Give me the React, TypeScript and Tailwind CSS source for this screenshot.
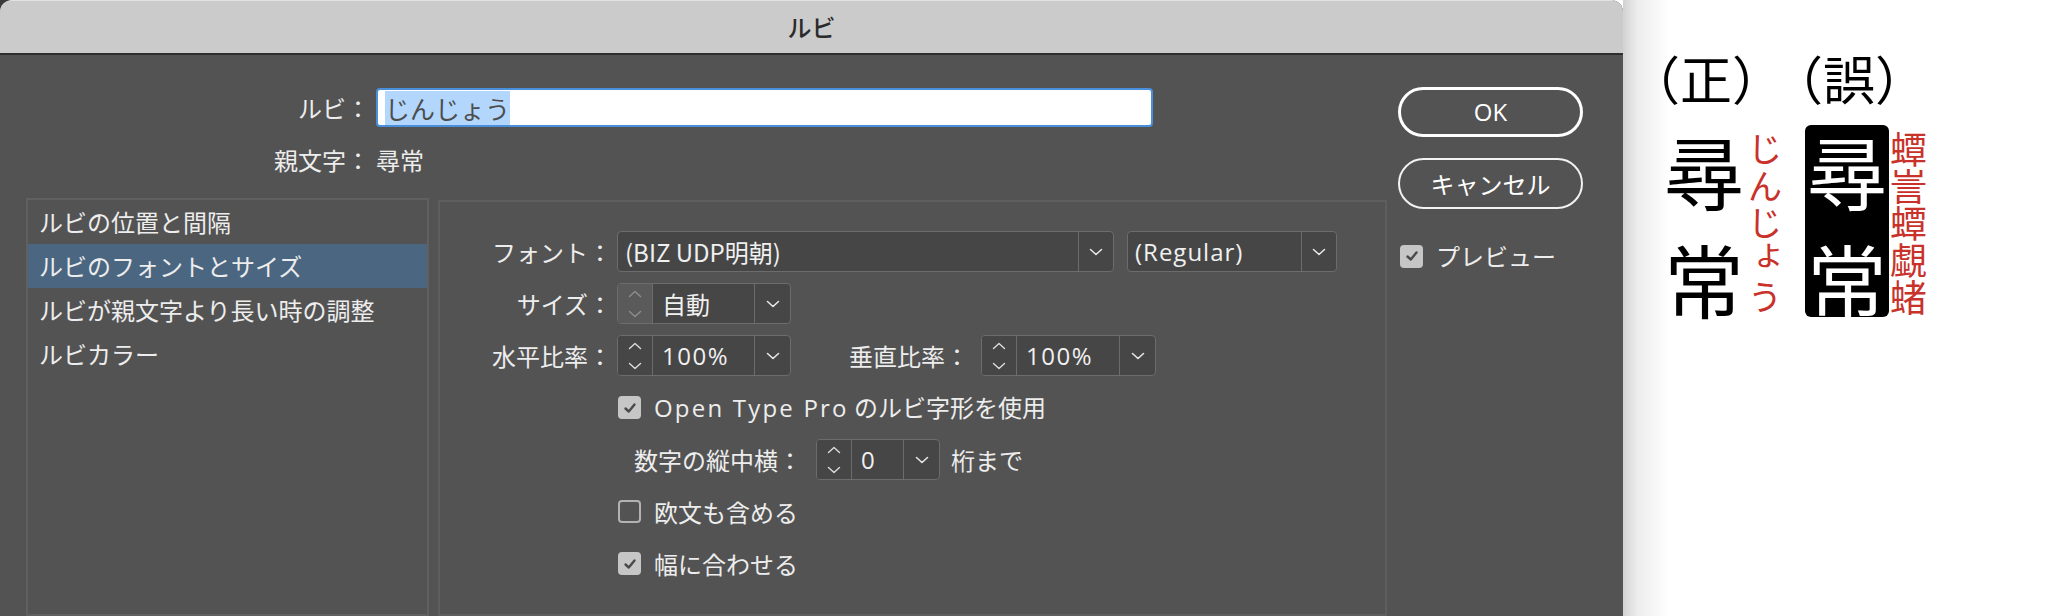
import React from "react";

const JP = "font-[family-name:'Noto_Sans_CJK_JP',sans-serif]";
const LATIN = "font-[family-name:'Open_Sans','Noto_Sans_CJK_JP',sans-serif]";

function Check() {
  return (
    <svg width="16" height="16" viewBox="0 0 16 16" fill="none">
      <path d="M3.5 8.5 L6.8 11.5 L12.5 4.5" stroke="#4a4a4a" strokeWidth="2.4" strokeLinecap="round" strokeLinejoin="round" />
    </svg>
  );
}

function Checkbox({ checked }: { checked: boolean }) {
  return checked ? (
    <div className="w-[23px] h-[23px] rounded-[4px] bg-[#c6c6c6] flex items-center justify-center shrink-0">
      <Check />
    </div>
  ) : (
    <div className="w-[23px] h-[23px] rounded-[4px] border-2 border-[#b2b2b2] shrink-0" />
  );
}

function Chevron() {
  return (
    <svg width="14" height="8" viewBox="0 0 14 8" fill="none">
      <path d="M1.5 1.5 L7 6.5 L12.5 1.5" stroke="#e6e6e6" strokeWidth="1.6" strokeLinecap="round" strokeLinejoin="round" />
    </svg>
  );
}

function Stepper({ dim }: { dim?: boolean }) {
  const c = dim ? "#8e8e8e" : "#dcdcdc";
  return (
    <div className={`w-[35px] shrink-0 flex flex-col items-center justify-center gap-[12px] border-r border-[#6c6c6c] ${dim ? "bg-[#5a5a5a]" : "bg-[#464646]"}`}>
      <svg width="14" height="8" viewBox="0 0 14 8" fill="none">
        <path d="M1.5 6.5 L7 1.5 L12.5 6.5" stroke={c} strokeWidth="1.4" strokeLinecap="round" strokeLinejoin="round" />
      </svg>
      <svg width="14" height="8" viewBox="0 0 14 8" fill="none">
        <path d="M1.5 1.5 L7 6.5 L12.5 1.5" stroke={c} strokeWidth="1.4" strokeLinecap="round" strokeLinejoin="round" />
      </svg>
    </div>
  );
}

function Spinner({ value, width, dim, latin }: { value: string; width: string; dim?: boolean; latin?: boolean }) {
  return (
    <div className={`flex h-[41px] ${width} rounded-[4px] border border-[#6c6c6c] bg-[#464646] overflow-hidden`}>
      <Stepper dim={dim} />
      <div className={`flex-1 flex items-center pl-[9px] text-[24px] text-[#f0f0f0] ${latin ? `${LATIN} tracking-[1.5px]` : ""}`}>{value}</div>
      <div className="w-[36px] shrink-0 border-l border-[#6c6c6c] flex items-center justify-center">
        <Chevron />
      </div>
    </div>
  );
}

function Dropdown({ value, width, latin }: { value: string; width: string; latin?: boolean }) {
  return (
    <div className={`flex h-[41px] ${width} rounded-[4px] border border-[#6c6c6c] bg-[#464646] overflow-hidden`}>
      <div className={`flex-1 flex items-center pl-[7px] text-[24px] text-[#f0f0f0] ${latin ? `${LATIN} tracking-[1px]` : ""}`}>{value}</div>
      <div className="w-[35px] shrink-0 border-l border-[#6c6c6c] flex items-center justify-center">
        <Chevron />
      </div>
    </div>
  );
}

// 縦書きの文字列（1字ずつ積む）
function Tate({ chars, cell, className }: { chars: string[]; cell: string; className: string }) {
  return (
    <div className={`flex flex-col items-center ${className}`}>
      {chars.map((ch, i) => (
        <div key={i} className={`${cell} ${ch === "ょ" ? "translate-x-[4px] -translate-y-[8px]" : ""}`}>
          {ch}
        </div>
      ))}
    </div>
  );
}

const menu = ["ルビの位置と間隔", "ルビのフォントとサイズ", "ルビが親文字より長い時の調整", "ルビカラー"];

export default function App() {
  return (
    <div className={`w-[2052px] h-[616px] flex bg-white overflow-hidden ${JP}`}>
      {/* ダイアログ */}
      <div className="w-[1623px] h-full shrink-0 flex flex-col bg-[#3a3a3a] rounded-tr-[12px] overflow-hidden">
        <div className="h-[55px] shrink-0 bg-[#cbcbcb] rounded-tl-[12px] border-t border-[#e2e2e2] border-b-2 border-b-[#2e2e2e] flex items-center justify-center text-[24px] font-medium text-[#2b2b2b]">
          ルビ
        </div>

        <div className="flex-1 min-h-0 bg-[#535353] flex pl-[26px] text-[24px] text-[#ededed]">
          <div className="w-[1361px] shrink-0 flex flex-col pt-[33px]">
            <div className="grid grid-cols-[344px_777px] gap-x-[6px]">
              <div className="h-[39px] flex items-center justify-end">ルビ：</div>
              <div className="h-[39px] rounded-[4px] border-2 border-[#4a8fdb] bg-white flex items-center pl-[7px]">
                <span className="bg-[#b3d6fd] text-[#4d4d4d] text-[25px] leading-[34px]">じんじょう</span>
              </div>
              <div className="h-[32px] mt-[17px] flex items-center justify-end">親文字：</div>
              <div className="h-[32px] mt-[17px] flex items-center">尋常</div>
            </div>

            <div className="flex-1 flex gap-[9px] mt-[22px]">
              <div className="w-[403px] shrink-0 border-2 border-[#606060]">
                {menu.map((m, i) => (
                  <div key={m} className={`h-[44px] flex items-center pl-[11px] ${i === 1 ? "bg-[#4b6681]" : ""}`}>
                    {m}
                  </div>
                ))}
              </div>

              <div className="flex-1 mt-[2px] border-2 border-[#5e5e5e] flex flex-col gap-[11px] pt-[29px]">
                <div className="h-[41px] flex items-center">
                  <div className="w-[172px] text-right">フォント：</div>
                  <div className="ml-[5px] flex gap-[13px]">
                    <Dropdown value="(BIZ UDP明朝)" width="w-[497px]" />
                    <Dropdown value="(Regular)" width="w-[210px]" latin />
                  </div>
                </div>
                <div className="h-[41px] flex items-center">
                  <div className="w-[172px] text-right">サイズ：</div>
                  <div className="ml-[5px]">
                    <Spinner value="自動" width="w-[174px]" dim />
                  </div>
                </div>
                <div className="h-[41px] flex items-center">
                  <div className="w-[172px] text-right">水平比率：</div>
                  <div className="ml-[5px]">
                    <Spinner value="100%" width="w-[174px]" latin />
                  </div>
                  <div className="ml-[58px]">垂直比率：</div>
                  <div className="ml-[12px]">
                    <Spinner value="100%" width="w-[175px]" latin />
                  </div>
                </div>
                <div className="h-[41px] flex items-center pl-[178px] gap-[13px]">
                  <Checkbox checked />
                  <span>
                    <span className={`${LATIN} tracking-[2.2px]`}>Open Type Pro</span> のルビ字形を使用
                  </span>
                </div>
                <div className="h-[41px] flex items-center pl-[194px]">
                  <span>数字の縦中横：</span>
                  <div className="ml-[14px]">
                    <Spinner value="0" width="w-[124px]" latin />
                  </div>
                  <span className="ml-[11px]">桁まで</span>
                </div>
                <div className="h-[41px] flex items-center pl-[178px] gap-[13px]">
                  <Checkbox checked={false} />
                  <span>欧文も含める</span>
                </div>
                <div className="h-[41px] flex items-center pl-[178px] gap-[13px]">
                  <Checkbox checked />
                  <span>幅に合わせる</span>
                </div>
              </div>
            </div>
          </div>

          <div className="ml-[11px] w-[185px] shrink-0 flex flex-col pt-[32px]">
            <button className={`h-[50px] rounded-full border-[3px] border-white text-[24px] leading-none text-white ${LATIN}`}>OK</button>
            <button className="h-[51px] mt-[21px] rounded-full border-2 border-[#f2f2f2] text-[24px] leading-none text-white">キャンセル</button>
            <div className="mt-[29px] ml-[2px] flex items-center gap-[13px]">
              <Checkbox checked />
              <span>プレビュー</span>
            </div>
          </div>
        </div>
      </div>

      {/* 正誤の見本 */}
      <div className="flex-1 h-full bg-[linear-gradient(to_right,#d2d2d2,#ececec_14px,#ffffff_46px)] flex items-start pl-[5px] pt-[52px]">
        <div className="w-[156px] shrink-0 flex flex-col">
          <div className="text-[52px] leading-[52px] text-black whitespace-nowrap">（正）</div>
          <div className="flex items-start mt-[25px]">
            <Tate chars={["尋", "常"]} cell="h-[80px] leading-[80px]" className="ml-[36px] w-[80px] gap-[28px] text-[80px] text-black" />
            <Tate chars={["じ", "ん", "じ", "ょ", "う"]} cell="h-[37px] leading-[37px]" className="ml-[4px] w-[34px] text-[34px] text-[#c8322b]" />
          </div>
        </div>
        <div className="-ml-[13px] w-[160px] shrink-0 flex flex-col">
          <div className="text-[52px] leading-[52px] text-black whitespace-nowrap">（誤）</div>
          <div className="flex items-start mt-[21px]">
            <div className="ml-[34px] w-[84px] h-[192px] shrink-0 bg-black rounded-[6px] pt-[4px] flex justify-center">
              <Tate chars={["尋", "常"]} cell="h-[80px] leading-[80px]" className="w-[80px] gap-[28px] text-[80px] text-white" />
            </div>
            <Tate chars={["蟫", "訔", "蟫", "覷", "蝫"]} cell="h-[37px] leading-[37px]" className="w-[39px] mt-[5px] text-[37px] text-[#c8322b]" />
          </div>
        </div>
      </div>
    </div>
  );
}
